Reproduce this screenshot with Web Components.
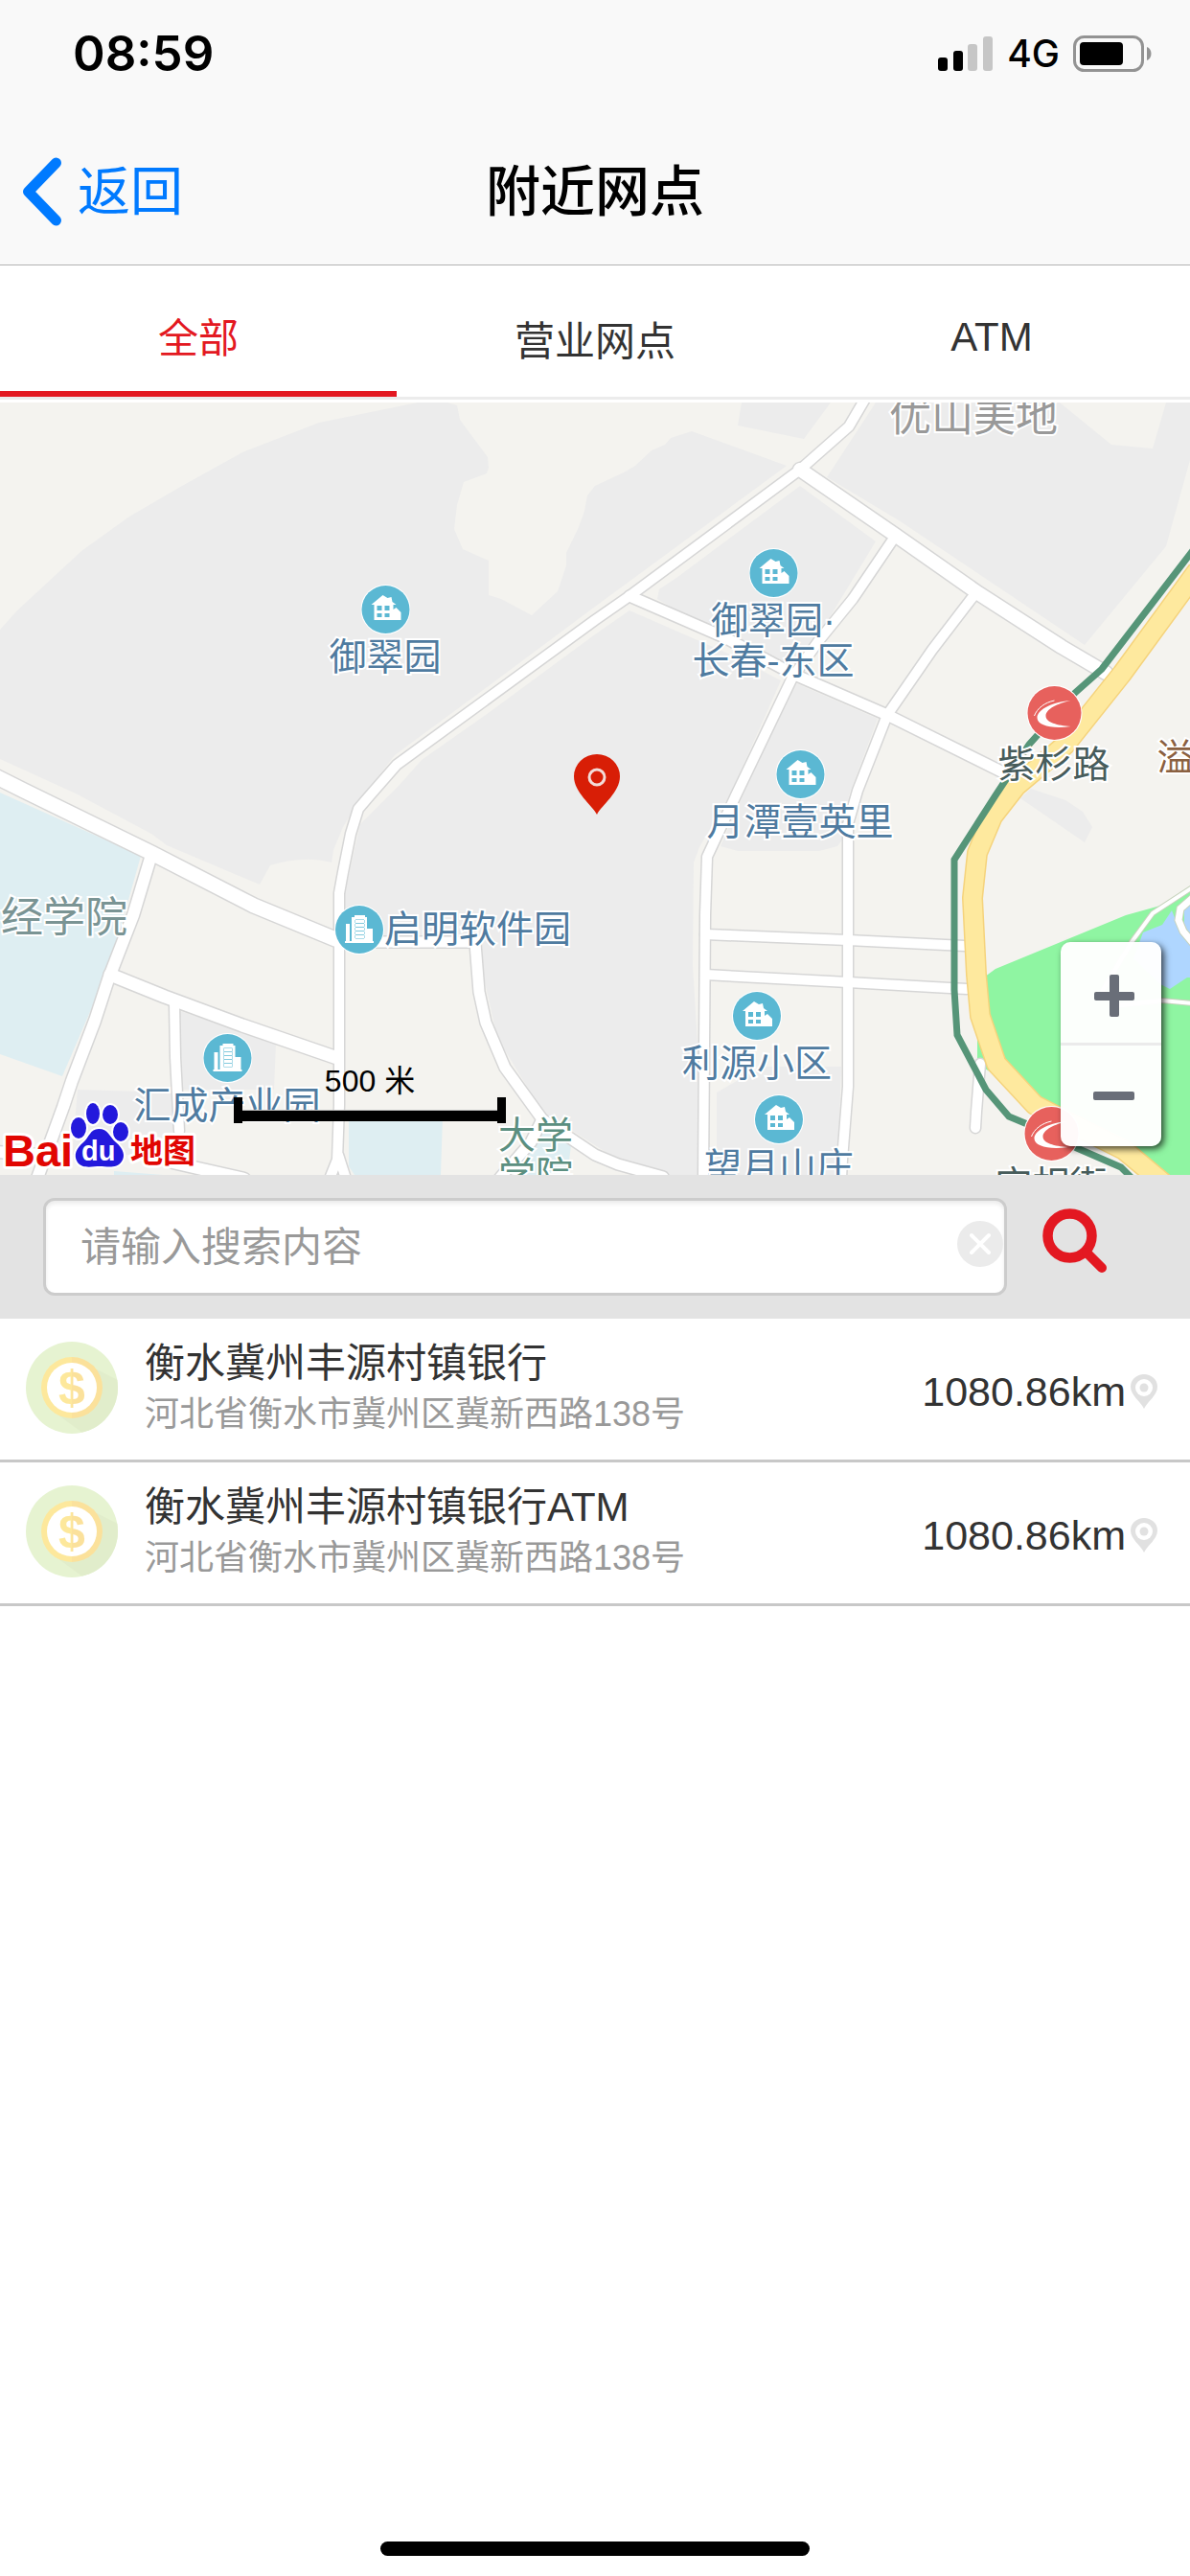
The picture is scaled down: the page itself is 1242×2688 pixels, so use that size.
<!DOCTYPE html>
<html lang="zh-CN">
<head>
<meta charset="utf-8">
<meta name="viewport" content="width=device-width, initial-scale=1">
<title>附近网点</title>
<style>
  body {
    margin: 0;
    background: #fff;
    color: #333;
    font-family: "Liberation Sans", "Noto Sans CJK SC", sans-serif;
  }
</style>
</head>
<body>
<branch-page>
  <status-bar slot="top" time="08:59" network="4G"></status-bar>
  <nav-bar slot="top" back="返回">附近网点</nav-bar>

  <tab-bar>
    <tab-item active>全部</tab-item>
    <tab-item>营业网点</tab-item>
    <tab-item>ATM</tab-item>
  </tab-bar>

  <branch-map scale="500 米">
    <map-poi x="1016" y="-7" kind="area" tone="grey">优山美地</map-poi>
    <map-poi x="67" y="516" kind="area" tone="school">经学院</map-poi>
    <map-poi x="559" y="744" kind="text" tone="campus">大学<br>学院</map-poi>
    <map-poi x="1227" y="350" kind="text" tone="brown">溢</map-poi>
    <map-poi x="402" y="190" kind="house">御翠园</map-poi>
    <map-poi x="807" y="152" kind="house">御翠园·<br>长春-东区</map-poi>
    <map-poi x="835" y="362" kind="house">月潭壹英里</map-poi>
    <map-poi x="790" y="614" kind="house">利源小区</map-poi>
    <map-poi x="813" y="722" kind="house">望月山庄</map-poi>
    <map-poi x="237" y="658" kind="office">汇成产业园</map-poi>
    <map-poi x="349" y="524" kind="office" side>启明软件园</map-poi>
    <map-poi x="1100" y="294" kind="metro" tone="station">紫杉路</map-poi>
    <map-poi x="1097" y="733" kind="metro" tone="station">宝相街</map-poi>
  </branch-map>

  <search-bar placeholder="请输入搜索内容"></search-bar>

  <branch-list>
    <branch-item distance="1080.86km">
      衡水冀州丰源村镇银行
      <span slot="address">河北省衡水市冀州区冀新西路138号</span>
    </branch-item>
    <branch-item distance="1080.86km">
      衡水冀州丰源村镇银行ATM
      <span slot="address">河北省衡水市冀州区冀新西路138号</span>
    </branch-item>
  </branch-list>
</branch-page>

<script>
class BaseElement extends HTMLElement {
  constructor() {
    super()
    this.attachShadow({ mode: 'open' })
  }

  connectedCallback() {
    this.shadowRoot.innerHTML = `
      <style>
        *, :host { box-sizing: border-box; }
        button, a, input { font: inherit; color: inherit; }
        button { border: 0; padding: 0; background: none; }
        svg { display: block; }
      </style>
      ${this.render()}
    `
  }

  attr(name) {
    return this.getAttribute(name) || ''
  }
}

class BranchPage extends BaseElement {
  render() {
    return `
      <style>
        :host { display: flex; flex-direction: column; min-height: 100vh; }
        header { background: #f9f9f9; border-bottom: 1px solid #b2b2b2; }
        footer { margin-top: auto; padding: 21px 0; }
        .home { width: 36%; height: 15px; margin: 0 auto; border-radius: 8px; background: #000; }
      </style>
      <header><slot name="top"></slot></header>
      <slot></slot>
      <footer><div class="home"></div></footer>
    `
  }
}

class StatusBar extends BaseElement {
  render() {
    return `
      <style>
        :host {
          display: flex;
          justify-content: space-between;
          height: 124px;
          padding: 26px 39px 0 76px;
          color: #000;
          font-family: Inter, sans-serif;
          line-height: 60px;
        }
        time { font-size: 51px; font-weight: 600; }
        .right { display: flex; align-items: center; height: 60px; gap: 14px; }
        .network { font-size: 39px; font-weight: 500; }
      </style>
      <time>${this.attr('time')}</time>
      <div class="right">
        <svg width="58" height="38" viewBox="0 0 58 38" aria-hidden="true">
          <rect x="0" y="23" width="10" height="14" rx="3"/>
          <rect x="16" y="16" width="10" height="21" rx="3"/>
          <g fill="#c6c6c6">
            <rect x="31" y="9" width="10" height="28" rx="3"/>
            <rect x="47" y="1" width="10" height="36" rx="3"/>
          </g>
        </svg>
        <span class="network">${this.attr('network')}</span>
        <svg width="83" height="38" viewBox="0 0 83 38" aria-hidden="true">
          <rect x="1.500" y="1.500" width="71" height="35" rx="10" fill="none" stroke="#939393" stroke-width="3"/>
          <rect x="7" y="7" width="45" height="24" rx="4"/>
          <path d="M77 12C83 14 83 24 77 26Z" fill="#939393"/>
        </svg>
      </div>
    `
  }
}

class NavBar extends BaseElement {
  render() {
    return `
      <style>
        :host {
          display: grid;
          grid-template-columns: 1fr auto 1fr;
          align-items: center;
          height: 152px;
          padding: 0 23px;
          font-size: 57px;
          line-height: 80px;
        }
        a { display: flex; align-items: center; gap: 17px; color: #007aff; text-decoration: none; font-size: 55px; }
        h1 { margin: 0; font-size: inherit; font-weight: 500; color: #000; }
      </style>
      <a href="#">
        <svg width="41" height="72" viewBox="0 0 41 72" fill="none" stroke="#007aff" stroke-width="11" aria-hidden="true">
          <path d="M35.500 6L6.500 36L35.500 66" stroke-linecap="round" stroke-linejoin="round"/>
        </svg>
        <span>${this.attr('back')}</span>
      </a>
      <h1><slot></slot></h1>
    `
  }
}

class TabBar extends BaseElement {
  render() {
    return `
      <style>
        :host { display: block; padding-bottom: 3px; }
        div { display: flex; border-bottom: 3px solid #ececec; }
      </style>
      <div role="tablist"><slot></slot></div>
    `
  }
}

class TabItem extends BaseElement {
  render() {
    return `
      <style>
        :host { display: block; flex: 1; }
        button { width: 100%; height: 137px; padding-top: 13px; font-size: 42px; color: #333; }
        :host([active]) button { color: #e31821; border-bottom: 6px solid #e31821; }
      </style>
      <button role="tab" aria-selected="${this.hasAttribute('active')}"><slot></slot></button>
    `
  }
}

// [path, width] of the white streets, in the map's own units
const streets = [
  ['M903 -4L886 25L835 70L657 202L621 227L414 378L386 410L374 424L366 450L358 490L354 512L354 733L352 790L344 810M353 785L361 810', 10],
  ['M835 70L934 138L1021 199L1108 255L1154 282', 14],
  ['M657 202L756 245L827 283L926 326L1049 387', 11],
  ['M934 140L890 205L855 248L827 287L768 410L738 474L736 535L734 810', 10],
  ['M1019 198L973 258L926 326L895 405L885 440L885 714L879 790L878 810', 10],
  ['M736 555L885 561L1007 567', 10],
  ['M736 597L885 605L1009 612', 10],
  ['M1023 690L1019 740L1018 757', 10],
  ['M-5 390L25 405L158 470L265 525L350 560', 15],
  ['M158 472L139 535L113 602L99 645L75 708L66 735L38 812', 12],
  ['M115 597L172 620L253 650L352 684', 13],
  ['M182 627L183 683L187 760', 10],
  ['M358 563L496 563', 11],
  ['M496 564L500 615L507 647L527 694L566 748L621 785L645 795L692 808', 11],
  ['M566 748L554 772L521 810', 11],
  ['M-5 782L60 786M180 793L255 810', 12]
]

class BranchMap extends BaseElement {
  render() {
    const lines = (color, extra) => streets
      .map(([d, w]) => `<path d="${d}" stroke="${color}" stroke-width="${w + extra}"/>`)
      .join('')

    return `
      <style>
        :host { display: block; position: relative; height: 806px; overflow: hidden; background: #f4f3ef; }
        .ground { position: absolute; top: 0; left: 0; width: 1242px; height: 806px; }
        .marker { position: absolute; left: 598px; top: 366px; }
        .logo { position: absolute; left: 0; bottom: 0; }
        .scale { position: absolute; left: 244px; top: 688px; width: 284px; color: #000; font-size: 32px; line-height: 40px; text-align: center; }
        .bar { height: 27px; margin-top: -3px; border: solid #000; border-width: 0 9px; }
        .bar::before { content: ""; display: block; position: relative; top: 13px; height: 11px; background: #000; border-top: 1px solid #bbb; }
        .zoom {
          position: absolute;
          right: 30px;
          bottom: 30px;
          display: grid;
          width: 105px;
          border-radius: 10px;
          background: rgba(255, 255, 255, .97);
          box-shadow: 3px 3px 7px rgba(0, 0, 0, .7);
        }
        .zoom button { display: grid; place-items: center; height: 105px; padding: 6px 0 0 6px; }
        .zoom button + button { border-top: 3px solid #ebebeb; height: 108px; padding-top: 0; }
      </style>
      <svg class="ground" viewBox="0 0 1242 806" fill="none" aria-hidden="true">
        <g fill="#ececec">
          <path d="M0 237L18 217L85 155L135 119L190 87L253 52L333 21L436 0H467L477 3L480 18L509 57L510 68L508 74L484 83L477 107L474 132L483 153L510 165V201L523 205L555 222L582 197L591 170V157L604 130L610 113L613 97L621 87L651 73L663 66L680 50L694 44L700 37L722 30L821 66L621 213L515 292L412 368L374 417L358 443L348 467L346 480Q317 472 282 483L271 503L174 462L158 450L79 408L0 372Z"/>
          <path d="M621 242L657 217L760 262L815 290L764 405L730 464L724 480L723 587L729 687L728 806H692L641 788L621 775L566 740L519 663L505 600L503 563H360V510L376 440L416 400L440 373L511 323Z"/>
          <path d="M835 87L914 145L829 285L779 260L686 205L688 195L706 183Z"/>
          <path d="M774 0H867L839 38L770 24ZM914 0H1106L1160 44L1203 48L1217 0H1242V60L1217 150L1132 253L938 123L863 78Z"/>
          <path d="M831 293L916 330L886 410L880 455L874 463L855 468H770L752 463L779 400Z"/>
          <path d="M748 720L795 693H878L874 806H748Z"/>
          <path d="M1065 413L1076 403L1112 415L1130 427L1140 443L1132 459Z"/>
          <path d="M188 635L253 657L288 668L286 717H190ZM81 717L182 720V785H75Z"/>
        </g>
        <g fill="#deeef2">
          <path d="M0 407L147 473L115 587L65 703L0 680Z"/>
          <path d="M364 745H462L460 806H370L364 797ZM554 760H598L592 806H548ZM119 802L170 806H119Z"/>
        </g>
        <path d="M1020 605L1039 591L1175 535L1211 525L1242 508V806H1205L1020 690Z" fill="#8ff5a2"/>
        <path d="M1223 530L1213 545L1193 553L1183 580L1211 607L1221 612L1239 600H1242V565L1227 540ZM1242 520L1236 530V548L1242 556Z" fill="#afd6ff"/>
        <g stroke="#c7d3bd" stroke-width="6"><path d="M1246 505L1203 533L1181 563L1150 615M1160 630L1213 624L1246 627"/></g>
        <g stroke="#fff" stroke-width="4"><path d="M1246 505L1203 533L1181 563L1150 615M1160 630L1213 624L1246 627"/></g>
        <path d="M1246 516L1232 528L1230 540L1235 552L1246 565" stroke="#c7d3bd" stroke-width="9"/>
        <path d="M1246 516L1232 528L1230 540L1235 552L1246 565" stroke="#fff" stroke-width="7"/>
        <g stroke-linejoin="round" stroke-linecap="round">
          ${lines('#d6d6d6', 3)}
          ${lines('#fff', 0)}
        </g>
        <g stroke-linejoin="round">
          <path d="M1250 175L1171 283L1112 357L1061 400L1036 432L1020 470L1015 517L1019 597L1023 640L1040 690L1080 733L1117 752L1173 780L1215 815" stroke="#f5d37c" stroke-width="22"/>
          <path d="M1250 175L1171 283L1112 357L1061 400L1036 432L1020 470L1015 517L1019 597L1023 640L1040 690L1080 733L1117 752L1173 780L1215 815" stroke="#fee99e" stroke-width="19"/>
        </g>
        <path d="M1246 153L1150 278L1122 303L1074 357L1039 410L996 477V613L999 660L1029 717L1053 745L1096 763L1124 778L1170 798L1182 810" stroke="#569578" stroke-width="7"/>
      </svg>
      <slot></slot>
      <svg class="marker" width="50" height="66" viewBox="0 0 50 66" aria-hidden="true">
        <path d="M25 64C20 54 1 41 1 24A24 23 0 0 1 49 24C49 41 30 54 25 64Z" fill="#d81e06"/>
        <circle cx="25" cy="25" r="8" fill="none" stroke="#f3dcd8" stroke-width="3"/>
      </svg>
      <svg class="logo" width="212" height="84" viewBox="0 0 212 84" aria-label="Baidu 地图">
        <g fill="#e10602" stroke="#fff" stroke-width="6" stroke-linejoin="round" paint-order="stroke" font-weight="700">
          <text x="3" y="75" font-size="47">Bai</text>
          <text x="136" y="71" font-size="34">地图</text>
        </g>
        <g fill="#2319dc" stroke="#fff" stroke-width="4" paint-order="stroke">
          <ellipse cx="82" cy="35" rx="8" ry="11"/>
          <ellipse cx="97" cy="20" rx="7" ry="11"/>
          <ellipse cx="115" cy="21" rx="8" ry="10"/>
          <ellipse cx="126" cy="39" rx="8" ry="10"/>
          <path d="M103 36C113 36 114 44 121 50C129 57 131 64 127 70C122 78 111 75 104 75C97 75 86 78 81 71C76 63 80 56 87 50C93 45 94 36 103 36Z"/>
        </g>
        <text x="85" y="69" font-size="29" font-weight="700" fill="#fff">du</text>
      </svg>
      <div class="scale">${this.attr('scale')}<div class="bar"></div></div>
      <div class="zoom">
        <button aria-label="放大">
          <svg width="44" height="44" viewBox="0 0 44 44" fill="#696e78"><rect x="1" y="18" width="42" height="9" rx="2"/><rect x="17" y="0" width="10" height="44" rx="2"/></svg>
        </button>
        <button aria-label="缩小">
          <svg width="44" height="44" viewBox="0 0 44 44" fill="#696e78"><rect x="0" y="17" width="43" height="9" rx="2"/></svg>
        </button>
      </div>
    `
  }
}

const poiIcons = {
  house: `
    <svg width="52" height="52" viewBox="-26 -26 52 52" aria-hidden="true">
      <circle r="25" fill="#5bb8d3" stroke="#fff" stroke-width="2"/>
      <path d="M-15 -5L-3 -15L2 -12L6 -13L7 -8L11 -5H8V0L11 -2L16 3V11H-12V-5Z" fill="#fff"/>
      <path d="M-9 -4h5v5h-5zM-1 -4h5v5h-5zM-9 4h5v4h-5zM-1 4h5v4h-5z" fill="#5bb8d3"/>
    </svg>`,
  office: `
    <svg width="52" height="52" viewBox="-26 -26 52 52" aria-hidden="true">
      <circle r="25" fill="#5bb8d3" stroke="#fff" stroke-width="2"/>
      <path d="M-8 12V-13H-5V-15H6V-13H8V-1H14V12H15V14H-15V12H-14V-6H-10V12Z" fill="#fff"/>
      <path d="M-4 -10h9v3h-9zM-4 -6h9v3h-9zM-4 -2h9v3h-9zM-4 2h9v3h-9zM-4 6h9v3h-9z" fill="#fff" stroke="#5bb8d3" stroke-width="1"/>
    </svg>`,
  metro: `
    <svg width="60" height="60" viewBox="-30 -30 60 60" aria-hidden="true">
      <circle r="28" fill="#e7615d" stroke="#fff" stroke-width="2"/>
      <path d="M17 -13C0 -12 -18 -4 -18 5C-18 13 -2 17 17 14C3 13 -9 10 -9 3C-9 -4 3 -10 17 -13Z" fill="#fff"/>
      <path d="M-21 3C-18 -5 -10 -11 0 -13" fill="none" stroke="#fff" stroke-width="1"/>
    </svg>`
}

class MapPoi extends BaseElement {
  render() {
    return `
      <style>
        :host {
          --tone: #4f7ba0;
          position: absolute;
          left: ${this.attr('x')}px;
          top: ${this.attr('y')}px;
          display: flex;
          flex-direction: column;
          align-items: center;
          gap: 3px;
          transform: translateX(-50%);
          color: var(--tone);
          font-size: 39px;
          line-height: 42px;
          text-align: center;
          white-space: nowrap;
          -webkit-text-stroke: 4px #fff;
          paint-order: stroke fill;
        }
        :host([side]) { flex-direction: row; gap: 0; transform: none; }
        :host([kind="area"]) { font-size: 44px; line-height: 44px; }
        :host([tone="grey"]) { --tone: #999; }
        :host([tone="school"]) { --tone: #7a9494; }
        :host([tone="campus"]) { --tone: #5b8f80; }
        :host([tone="brown"]) { --tone: #8a6040; }
        :host([tone="station"]) { --tone: #475c5b; }
      </style>
      ${poiIcons[this.attr('kind')] || ''}
      <span><slot></slot></span>
    `
  }
}

class SearchBar extends BaseElement {
  render() {
    return `
      <style>
        :host { display: block; background: #e3e3e3; }
        form { display: flex; align-items: center; gap: 37px; padding: 24px 87px 24px 45px; }
        .field { position: relative; flex: 1; }
        input {
          display: block;
          width: 100%;
          height: 102px;
          padding: 2px 60px 0 36px;
          border: 3px solid #ccc;
          border-radius: 12px;
          background: #fff;
          box-shadow: inset 0 3px 4px rgba(0, 0, 0, .08);
          font-size: 42px;
          outline: 0;
        }
        input::placeholder { color: #999; opacity: 1; }
        .clear { position: absolute; top: 24px; right: 4px; }
      </style>
      <form>
        <div class="field">
          <input type="text" aria-label="搜索网点" placeholder="${this.attr('placeholder')}">
          <button class="clear" type="reset" aria-label="清除">
            <svg width="48" height="48" viewBox="0 0 48 48">
              <circle cx="24" cy="24" r="24" fill="#ebebeb"/>
              <path d="M15 15L33 33M33 15L15 33" stroke="#fff" stroke-width="4" stroke-linecap="round"/>
            </svg>
          </button>
        </div>
        <button type="submit" aria-label="搜索">
          <svg width="67" height="82" viewBox="0 0 67 82" fill="none" stroke="#e31821">
            <circle cx="28.500" cy="29.500" r="23" stroke-width="10.500"/>
            <path d="M46 47L62 63" stroke-width="10" stroke-linecap="round"/>
          </svg>
        </button>
      </form>
    `
  }
}

class BranchList extends BaseElement {
  render() {
    return `
      <style>
        :host { display: block; }
        div { display: flex; flex-direction: column; }
      </style>
      <div role="list"><slot></slot></div>
    `
  }
}

class BranchItem extends BaseElement {
  render() {
    return `
      <style>
        :host {
          display: flex;
          align-items: center;
          gap: 28px;
          height: 150px;
          padding: 0 34px 3px 27px;
          border-bottom: 3px solid #c8c8c8;
        }
        .info { flex: 1; min-width: 0; }
        .name { font-size: 42px; line-height: 56px; }
        .address { font-size: 36px; line-height: 50px; color: #999; }
        .distance { display: flex; align-items: center; gap: 5px; padding-top: 8px; font-size: 43px; line-height: 56px; }
      </style>
      <svg width="96" height="96" viewBox="0 0 96 96" aria-hidden="true">
        <defs>
          <clipPath id="disc"><circle cx="48" cy="48" r="48"/></clipPath>
          <linearGradient id="gold">
            <stop offset=".5" stop-color="#fde89c"/>
            <stop offset=".5" stop-color="#fbe19b"/>
          </linearGradient>
        </defs>
        <circle cx="48" cy="48" r="48" fill="#e6f3d1"/>
        <path d="M74 29L100 42V100H66L26 71Z" fill="#e1edcb" clip-path="url(#disc)"/>
        <circle cx="48" cy="48" r="32" fill="url(#gold)"/>
        <circle cx="48" cy="48" r="26" fill="#fff"/>
        <text x="48" y="65" text-anchor="middle" font-size="50" font-weight="700" fill="url(#gold)">$</text>
      </svg>
      <div class="info">
        <div class="name"><slot></slot></div>
        <div class="address"><slot name="address"></slot></div>
      </div>
      <div class="distance">
        <span>${this.attr('distance')}</span>
        <svg width="28" height="36" viewBox="0 0 28 36" aria-hidden="true">
          <path d="M14 36C10 28 0 22 0 13A14 13 0 0 1 28 13C28 22 18 28 14 36Z" fill="#e1e1e1"/>
          <circle cx="14" cy="14" r="9" fill="#fff"/>
          <circle cx="14" cy="14" r="4.500" fill="#e1e1e1"/>
        </svg>
      </div>
    `
  }
}

customElements.define('branch-page', BranchPage)
customElements.define('status-bar', StatusBar)
customElements.define('nav-bar', NavBar)
customElements.define('tab-bar', TabBar)
customElements.define('tab-item', TabItem)
customElements.define('branch-map', BranchMap)
customElements.define('map-poi', MapPoi)
customElements.define('search-bar', SearchBar)
customElements.define('branch-list', BranchList)
customElements.define('branch-item', BranchItem)
</script>
</body>
</html>
